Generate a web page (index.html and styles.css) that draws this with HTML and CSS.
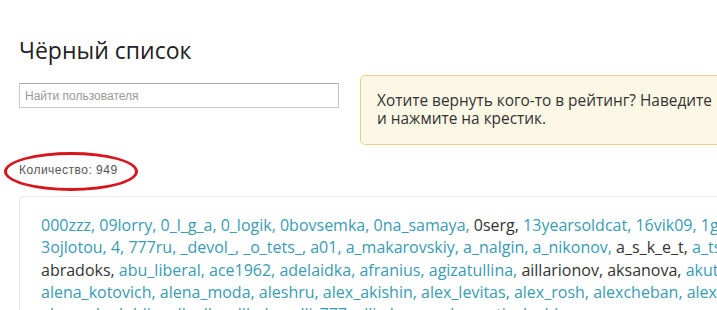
FILE: index.html
```html
<!DOCTYPE html>
<html lang="ru">
<head>
    <meta charset="UTF-8">
    <meta name="viewport" content="width=device-width, initial-scale=1.0">
    <title>Чёрный список</title>
    <link rel="stylesheet" href="styles.css">
</head>
<body>
    <div class="page">
        <h1>Чёрный список</h1>

        <div class="top-row">
            <input type="text" class="search" placeholder="Найти пользователя">
            <div class="notice">
                Хотите вернуть кого-то в рейтинг? Наведите курсор на имя пользователя<br>
                и нажмите на крестик.
            </div>
        </div>

        <div class="count">
            Количество: 949
            <span class="circle"></span>
        </div>

        <div class="list">
            <p class="users">
                <span class="user">000zzz,</span> <span class="user">09lorry,</span> <span class="user">0_l_g_a,</span> <span class="user">0_logik,</span> <span class="user">0bovsemka,</span> <span class="user">0na_samaya,</span> <span class="user dark">0serg,</span> <span class="user">13yearsoldcat,</span> <span class="user">16vik09,</span> <span class="user">1gorka,</span><br>
                <span class="user">3ojlotou,</span> <span class="user">4,</span> <span class="user">777ru,</span> <span class="user">_devol_,</span> <span class="user">_o_tets_,</span> <span class="user">a01,</span> <span class="user">a_makarovskiy,</span> <span class="user">a_nalgin,</span> <span class="user">a_nikonov,</span> <span class="user dark">a_s_k_e_t,</span> <span class="user">a_tsvetkov,</span><br>
                <span class="user dark">abradoks,</span> <span class="user">abu_liberal,</span> <span class="user">ace1962,</span> <span class="user">adelaidka,</span> <span class="user">afranius,</span> <span class="user">agizatullina,</span> <span class="user dark">aillarionov,</span> <span class="user dark">aksanova,</span> <span class="user">akutagava,</span><br>
                <span class="user">alena_kotovich,</span> <span class="user">alena_moda,</span> <span class="user">aleshru,</span> <span class="user">alex_akishin,</span> <span class="user">alex_levitas,</span> <span class="user">alex_rosh,</span> <span class="user">alexcheban,</span> <span class="user">alexey_k,</span><br>
                <span class="user">alexandr_dublin,</span> <span class="user">allaalla,</span> <span class="user">allbaba,</span> <span class="user">alli_777,</span> <span class="user">allisdream,</span> <span class="user">alnacrati,</span> <span class="user">alushka,</span>
            </p>
        </div>
    </div>
</body>
</html>
```

FILE: styles.css
```css
body {
    margin: 0;
    padding: 0;
    background: #ffffff;
    overflow: hidden;
    font-family: "Liberation Sans", Arial, sans-serif;
}
.page {
    width: 1000px;
    padding: 0 19px;
}
h1 {
    font-family: "Open Sans", Lato, sans-serif;
    font-size: 23px;
    font-weight: 400;
    color: #222;
    margin: 0;
    padding-top: 36px;
    line-height: 28px;
}
.top-row {
    display: flex;
    align-items: flex-start;
    margin-top: 11px;
}
.search {
    width: 320px;
    height: 25px;
    box-sizing: border-box;
    margin-top: 8px;
    padding: 2px 5px;
    border: 1px solid #c8c8c8;
    border-top-color: #a8a8a8;
    font-family: "Liberation Sans", Arial, sans-serif;
    font-size: 12px;
    color: #333;
}
.search::placeholder {
    color: #999;
}
.notice {
    margin-left: 21px;
    height: 70px;
    box-sizing: border-box;
    padding: 16px 16px 0;
    background: #fdf8e6;
    border: 1px solid #e6d389;
    border-radius: 5px;
    font-family: "Open Sans", Lato, sans-serif;
    font-size: 15.4px;
    line-height: 18px;
    color: #333;
    white-space: nowrap;
}
.count {
    position: relative;
    display: inline-block;
    margin-top: 18px;
    font-size: 12px;
    line-height: 14px;
    letter-spacing: 0.5px;
    color: #555;
}
.circle {
    position: absolute;
    left: -15px;
    top: -11px;
    width: 128px;
    height: 33px;
    border: 3px solid #d8141c;
    border-radius: 50%;
}
.list {
    margin-top: 18px;
    border: 1px solid #e8e8e8;
    border-radius: 4px;
    padding: 17px 21px;
}
.users {
    margin: 0;
    font-family: "Open Sans", Lato, sans-serif;
    font-size: 16px;
    line-height: 22.3px;
    color: #333;
    white-space: nowrap;
}
.user {
    color: #3a9bb4;
}
.user.dark {
    color: #333;
}
```
